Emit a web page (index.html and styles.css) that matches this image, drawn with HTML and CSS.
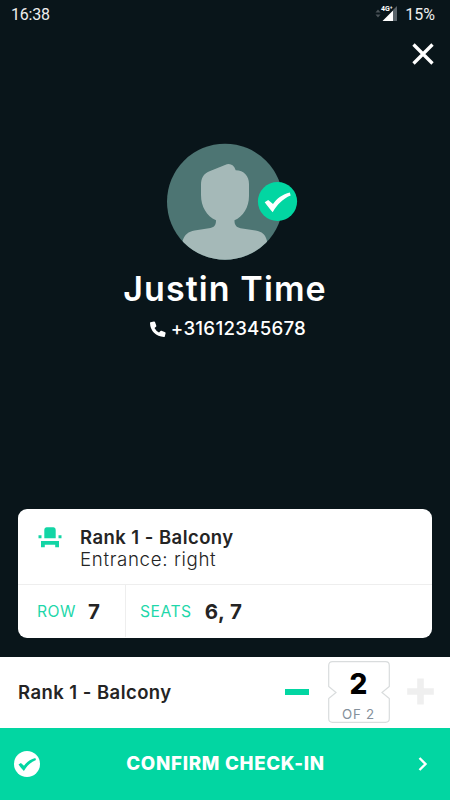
FILE: index.html
```html
<!DOCTYPE html>
<html lang="en">
<head>
<meta charset="utf-8">
<meta name="viewport" content="width=device-width, initial-scale=1">
<title>Check-in</title>
<link rel="stylesheet" href="styles.css">
</head>
<body>
<div class="screen">
  <header class="status">
    <span class="time">16:38</span>
    <svg class="signal" width="24" height="18" viewBox="0 0 24 18">
      <path d="M.5 7.500L3 4.500l2.500 3zM.5 9.500L3 12.500l2.500-3z" fill="#4b5358"/>
      <path d="M22 1v15h-4V5z" fill="#59636a"/>
      <path d="M7.500 16L18 5.500V16z" fill="#fff"/>
      <text x="6" y="6.300" class="network">4G⁺</text>
    </svg>
    <span class="battery">15%</span>
  </header>
  <button class="close" aria-label="Close">
    <svg width="24" height="24" viewBox="0 0 24 24"><path d="M2.500 2.500l19 19M21.500 2.500l-19 19" stroke="#fff" stroke-width="3.300" fill="none"/></svg>
  </button>
  <main class="profile">
    <svg class="avatar" width="132" height="118" viewBox="0 0 132 118">
      <defs><clipPath id="disc"><circle cx="59" cy="58.700" r="58"/></clipPath></defs>
      <circle cx="59" cy="58.700" r="58" fill="#4d7573"/>
      <path clip-path="url(#disc)" fill="#a5b9b8" d="M43.500 28.300L59 22C63.500 19.800 68 21.500 69.700 27.300C78 27.500 83 33 83 41V53C83 64.500 77 73.500 68.500 77.300V78C68.500 82 70.500 84.500 74.500 85.200L89.500 87.500C96 88.500 99.500 91.500 101 98V118H16.500V98C18.500 91.500 22.500 88.500 28.500 87.500L44.500 85C48.500 84.300 50 82 50 77.300C40.500 73 35 63.500 35 52V42C35 35 37.500 30.800 43.500 28.300Z"/>
      <circle cx="111.500" cy="58.500" r="19.600" fill="#02d6a2"/>
      <path d="M98.700 59.300L102.200 57L107 61C111 55.500 116.500 51.300 123.800 49.600L124.700 52.600C116.500 56 111.500 61.300 106.700 69.300C104 66.500 101.500 63 98.700 59.300Z" fill="#fff"/>
    </svg>
    <h1 class="name">Justin Time</h1>
    <div class="phone">
      <svg width="16" height="16" viewBox="0 0 16 16"><path d="M.5 1.300L4 .5q.7-.1 1 .5L6.300 4.700q.2.600-.3 1L4.500 7Q6.200 10.200 9 11.600L10.500 10q.4-.5 1-.2L15.200 11.300q.5.300.4.900L14.800 15.500q-.2.500-.8.500Q8 15.700 4 11.800Q.2 8 0 2Q0 1.500.5 1.300Z" fill="#fff"/></svg>
      <span class="number">+31612345678</span>
    </div>
  </main>
  <section class="ticket">
    <div class="ticket-top">
      <svg class="seat" width="24" height="21" viewBox="0 0 24 21" fill="#13d5a5">
        <path d="M6.300 11.300V2.800Q6.300.5 8.500.3Q12 0 15.500.3Q17.700.5 17.700 2.800V11.300ZM.5 8.200h3v3h-3zM20.500 8.200h3v3h-3zM3 14h18v6.300h-3.800v-2.600H6.800v2.600H3z"/>
      </svg>
      <div>
        <div class="place rank">Rank 1 - Balcony</div>
        <div class="entrance">Entrance: right</div>
      </div>
    </div>
    <div class="ticket-bottom">
      <div class="cell row"><span class="label">ROW</span><span class="value">7</span></div>
      <div class="cell seats"><span class="label">SEATS</span><span class="value seats-value">6, 7</span></div>
    </div>
  </section>
  <section class="counter">
    <span class="rank counter-rank">Rank 1 - Balcony</span>
    <button class="minus" aria-label="Remove one"></button>
    <div class="count">
      <svg class="count-frame" width="62" height="62" viewBox="0 0 62 62"><path d="M4.500.7H57.500Q61.300.7 61.300 4.500V25.500L54 31.500L61.300 37.500V57.500Q61.300 61.300 57.500 61.300H4.500Q.7 61.300.7 57.500V37.500L8 31.500L.7 25.500V4.500Q.7.7 4.500.7Z" fill="#fff" stroke="#d9dcdd" stroke-width="1.200"/></svg>
      <span class="current">2</span>
      <span class="total">OF 2</span>
    </div>
    <button class="plus" aria-label="Add one">
      <svg width="27" height="27" viewBox="0 0 27 27"><path d="M13.500.5v26M.2 13.500h26.600" stroke="#efefef" stroke-width="6.600"/></svg>
    </button>
  </section>
  <button class="confirm">
    <svg width="26" height="26" viewBox="0 0 26 26"><circle cx="13" cy="13" r="13" fill="#fff"/><path d="M4.500 13.500L6.900 12L10 14.700C12.700 11 16.500 8 21.300 7L22 9C16.700 11.200 13 14.800 9.900 20C8 18 6.200 15.900 4.500 13.500Z" fill="#02d6a2"/></svg>
    <span class="confirm-text">CONFIRM CHECK-IN</span>
    <svg width="10" height="14" viewBox="0 0 10 14"><path d="M1.500 1L7.500 7L1.500 13" fill="none" stroke="#fff" stroke-width="2.400"/></svg>
  </button>
</div>
</body>
</html>
```
FILE: styles.css
```css
* { box-sizing: border-box; }
body { margin: 0; background: #09151a; font-family: Inter, "Liberation Sans", sans-serif; }
button { border: 0; padding: 0; background: none; font: inherit; }
svg { display: block; flex: none; }
span { white-space: nowrap; }
.screen { width: 450px; height: 800px; display: flex; flex-direction: column; overflow: hidden; }
.status { height: 28px; display: flex; align-items: center; padding: 1px 15px 0 11px; color: #eee; font: 16px/27px Roboto, sans-serif; }
.time { flex: 1; letter-spacing: -.2px; }
.signal { margin: -1px 6px 0 0; }
.network { font: bold 7px Roboto, sans-serif; fill: #fff; }
.close { align-self: flex-end; margin: 14px 15px 0 0; }
.profile { display: flex; flex-direction: column; align-items: center; padding-top: 77px; color: #fff; }
.avatar { margin-left: 14px; }
.name { margin: 10px 0 0; height: 36px; line-height: 36px; font-size: 34px; font-weight: 600; white-space: nowrap; letter-spacing: 1.1px; }
.phone { height: 24px; margin-top: 10px; display: flex; align-items: center; gap: 5px; padding-left: 6px; }
.number { font-size: 18.7px; line-height: 24px; font-weight: 500; letter-spacing: .25px; }
.ticket { margin: auto 18px 19px; height: 129px; border-radius: 9px; background: #fff; color: #242424; display: flex; flex-direction: column; overflow: hidden; }
.ticket-top { height: 76px; border-bottom: 1px solid #eee; display: flex; padding: 16px 20px 0; gap: 18px; }
.seat { margin-top: 2px; }
.place { line-height: 24px; }
.rank { font-size: 18.5px; font-weight: 600; color: #242424; letter-spacing: .45px; }
.entrance { font-size: 18.7px; line-height: 22px; font-weight: 300; letter-spacing: .65px; }
.ticket-bottom { flex: 1; display: flex; padding-bottom: 1px; }
.cell { display: flex; align-items: center; }
.row { width: 108px; padding-left: 19px; border-right: 1px solid #eee; gap: 12px; }
.seats { padding-left: 14px; gap: 13px; }
.label { font-size: 15.7px; color: #1fd7aa; letter-spacing: .5px; }
.value { font-size: 20.5px; font-weight: 700; }
.seats-value { letter-spacing: .5px; }
.counter { height: 71px; flex: none; background: #fff; display: flex; align-items: center; padding: 0 18px 2px; }
.counter-rank { flex: 1; }
.minus { width: 24px; height: 6px; background: #02d6a2; margin-right: 19px; margin-top: 1px; }
.count { position: relative; width: 62px; height: 62px; display: flex; flex-direction: column; align-items: center; padding-top: 6px; margin-right: 17px; }
.count-frame { position: absolute; inset: 0; }
.current { position: relative; font-size: 28px; line-height: 35px; font-weight: 800; color: #000; }
.total { position: relative; font-size: 13.3px; line-height: 24px; color: #84909b; letter-spacing: .8px; }
.plus { margin-right: -1.500px; }
.confirm { height: 72px; flex: none; background: #02d6a2; color: #fff; display: flex; align-items: center; justify-content: space-between; padding: 0 22px 0 14px; }
.confirm-text { font-size: 18.7px; font-weight: 800; letter-spacing: .7px; margin: -2px 7px 0 0; }
```
